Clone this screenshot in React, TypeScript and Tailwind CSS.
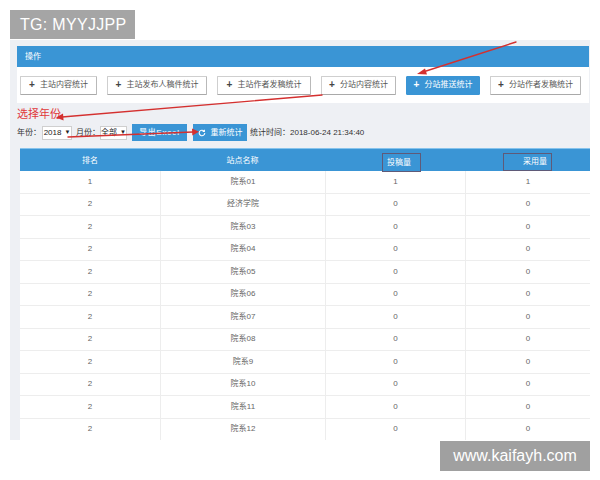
import React from "react";

const rows: [string, string, string, string][] = [
  ["1", "院系01", "1", "1"],
  ["2", "经济学院", "0", "0"],
  ["2", "院系03", "0", "0"],
  ["2", "院系04", "0", "0"],
  ["2", "院系05", "0", "0"],
  ["2", "院系06", "0", "0"],
  ["2", "院系07", "0", "0"],
  ["2", "院系08", "0", "0"],
  ["2", "院系9", "0", "0"],
  ["2", "院系10", "0", "0"],
  ["2", "院系11", "0", "0"],
  ["2", "院系12", "0", "0"],
];

const buttons: { label: string; w: string; active?: boolean }[] = [
  { label: "主站内容统计", w: "w-[77px]" },
  { label: "主站发布人稿件统计", w: "w-[100px]" },
  { label: "主站作者发稿统计", w: "w-[94px]" },
  { label: "分站内容统计", w: "w-[75px]" },
  { label: "分站推送统计", w: "w-[74px]", active: true },
  { label: "分站作者发稿统计", w: "w-[91px]" },
];

function Btn({ label, w, active }: { label: string; w: string; active?: boolean }) {
  return (
    <div
      className={
        "h-[19px] flex items-center justify-center gap-[5px] text-[8px] rounded-[1px] " +
        w +
        (active
          ? " bg-[#3a95d5] text-white border border-[#3a95d5]"
          : " bg-white text-[#555] border border-[#cfcfcf] border-b-[#a9a9a9] border-r-[#b9b9b9]")
      }
    >
      <span className={"font-bold text-[10px] leading-none " + (active ? "text-white" : "text-[#444]")}>+</span>
      <span>{label}</span>
    </div>
  );
}

export default function App() {
  return (
    <div className="relative w-[600px] h-[480px] bg-white overflow-hidden font-['Liberation_Sans','Noto_Sans_CJK_SC',sans-serif]">
      <div className="pt-[40px] pl-[10px]">
        <div className="w-[580px] h-[400px] bg-[#eef0f4] overflow-hidden pt-[6px] pl-[7px] pr-[1px]">
          {/* header bar */}
          <div className="h-[21px] bg-[#3a95d5] flex items-center pl-[8px] text-[8px] text-white">操作</div>
          {/* button panel */}
          <div className="h-[36px] bg-white flex items-center pl-[3px] gap-[10px]">
            {buttons.map((b) => (
              <Btn key={b.label} {...b} />
            ))}
          </div>
          {/* filter area */}
          <div className="h-[45px] flex flex-col">
            <div className="h-[20px] pt-[4px] text-[11px] leading-[14px] text-[#e0393b]">选择年份</div>
            <div className="h-[19px] flex items-center text-[8px] text-[#333]">
              <span>年份：</span>
              <div className="ml-[1px] w-[30px] h-[14px] bg-white border border-[#cfcfcf] flex items-center justify-center gap-[3px] text-[8px] text-[#222]">
                <span>2018</span>
                <span className="text-[6px]">▼</span>
              </div>
              <span className="ml-[4px]">月份：</span>
              <div className="w-[27px] h-[14px] bg-white border border-[#cfcfcf] flex items-center justify-center gap-[3px] text-[8px] text-[#222]">
                <span>全部</span>
                <span className="text-[6px]">▼</span>
              </div>
              <div className="ml-[5px] w-[55px] h-[17px] bg-[#3a95d5] flex items-center justify-center text-[8px] font-bold text-[#d3eafa] tracking-[0.5px]">
                导出Excel
              </div>
              <div className="ml-[6px] w-[54px] h-[17px] bg-[#3a95d5] flex items-center justify-center gap-[5px] text-[8px] text-white">
                <svg width="8" height="8" viewBox="0 0 10 10" fill="none" stroke="white" strokeWidth="1.3">
                  <path d="M8.5 5a3.5 3.5 0 1 1-1-2.5" />
                  <path d="M8 1v2.2H5.8" />
                </svg>
                <span>重新统计</span>
              </div>
              <span className="ml-[3px] text-[8px] text-[#333]">统计时间：2018-06-24 21:34:40</span>
            </div>
          </div>
          {/* table */}
          <div className="ml-[3px] w-[570px]">
            <div className="grid grid-cols-[140px_165px_140px_125px] h-[23px] bg-[#3a95d5] border-t border-[#86c3ec] text-[8px] text-white">
              <div className="flex items-center justify-center">排名</div>
              <div className="flex items-center justify-center">站点名称</div>
              <div className="flex items-start justify-center">
                <div className="mt-[4px] ml-[13px] w-[39px] h-[19px] border border-[#5f5a78] flex items-center pl-[4px]">投稿量</div>
              </div>
              <div className="flex items-start justify-center">
                <div className="mt-[4px] w-[49px] h-[18px] border border-[#5f5a78] flex items-center justify-end pr-[4px]">采用量</div>
              </div>
            </div>
            {rows.map((r, i) => (
              <div
                key={i}
                className="grid grid-cols-[140px_165px_140px_125px] h-[22.5px] bg-white border-b border-[#ededed] text-[8px] text-[#666]"
              >
                <div className="flex items-center justify-center">{r[0]}</div>
                <div className="flex items-center justify-center border-l border-[#ededed]">{r[1]}</div>
                <div className="flex items-center justify-center border-l border-[#ededed]">{r[2]}</div>
                <div className="flex items-center justify-center border-l border-[#ededed]">{r[3]}</div>
              </div>
            ))}
          </div>
        </div>
      </div>

      {/* watermarks */}
      <div className="absolute left-[10px] top-[10px] w-[125px] h-[29px] bg-[#a5a5a5] flex items-center pl-[10px] text-[16px] text-white tracking-[0.3px]">
        TG: MYYJJPP
      </div>
      <div className="absolute left-[440px] top-[441px] w-[150px] h-[30px] bg-[#a0a0a0] flex items-center justify-center text-[16px] text-white">
        www.kaifayh.com
      </div>

      {/* red annotation arrows */}
      <svg className="absolute left-0 top-0 pointer-events-none" width="600" height="480" viewBox="0 0 600 480">
        <g stroke="#d4302f" strokeWidth="1.4" fill="none" strokeLinecap="round">
          <line x1="516" y1="42" x2="423" y2="72" />
          <line x1="322" y1="95" x2="62" y2="117" />
          <line x1="68" y1="137" x2="193" y2="132" />
        </g>
        <g fill="#d4302f">
          <polygon points="417,74 425,68.5 427,74.5" />
          <polygon points="56,117.5 63,113.5 63.6,120.5" />
          <polygon points="199,131.8 192,128.5 192.3,135.5" />
        </g>
      </svg>
    </div>
  );
}
